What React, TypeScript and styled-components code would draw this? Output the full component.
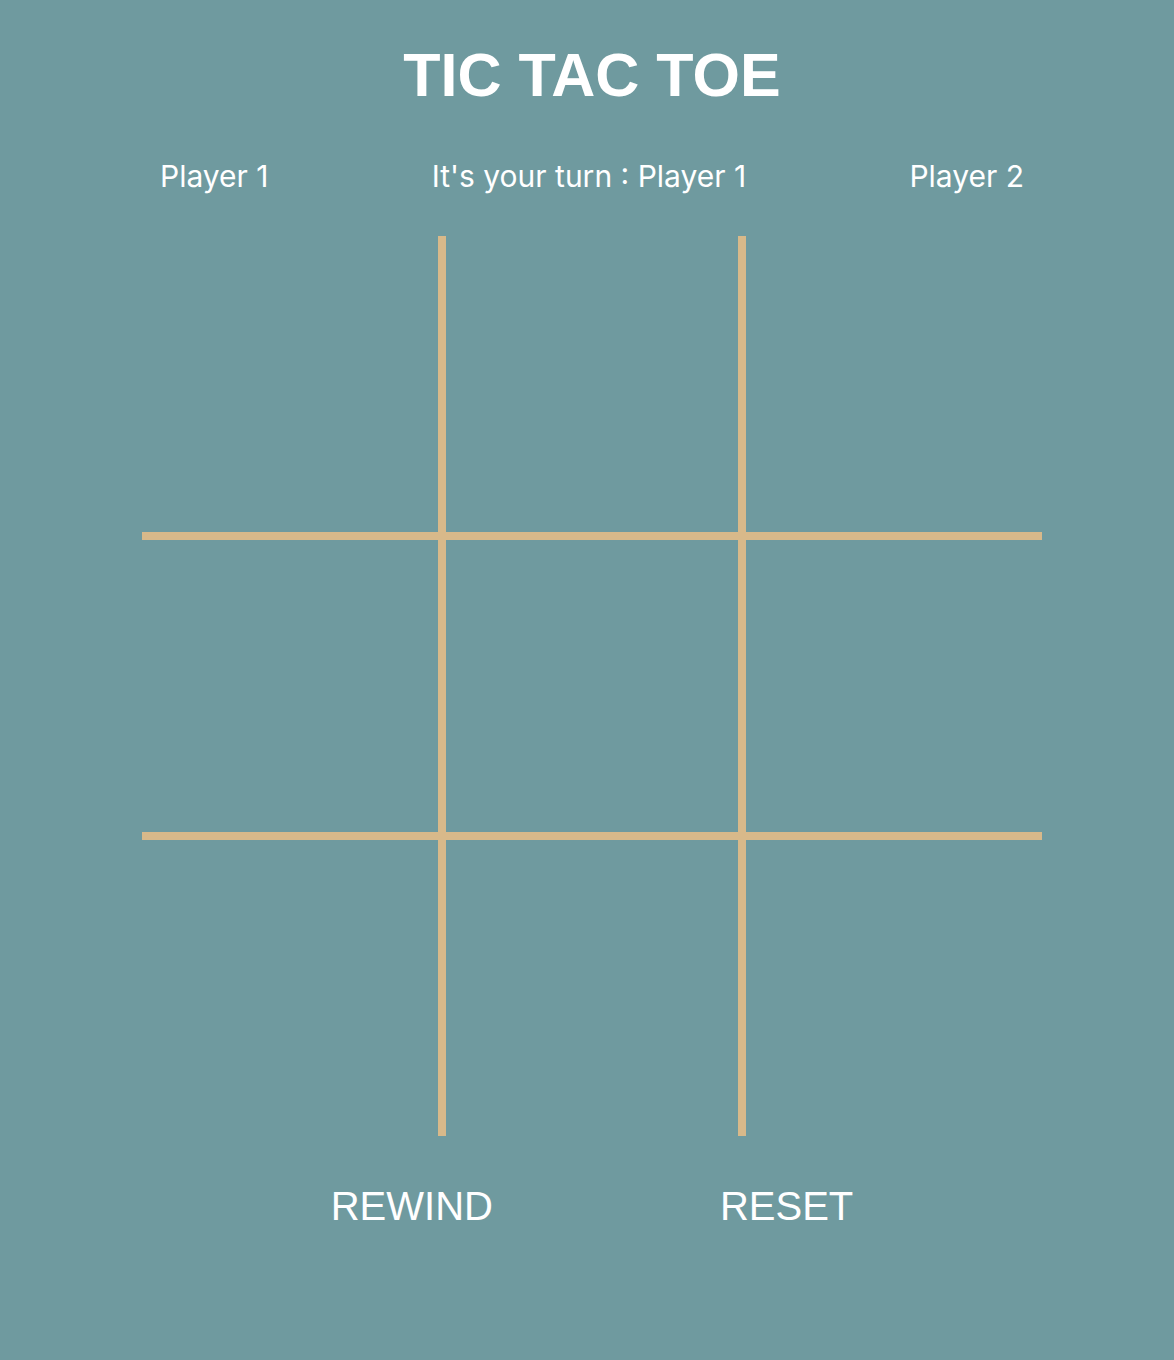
import React, { useState } from 'react'
import styled, { createGlobalStyle } from 'styled-components'

type Mark = 'X' | 'O' | null

const GlobalStyle = createGlobalStyle`
  html, body {
    margin: 0;
    padding: 0;
    background: #6f9a9f;
  }
  * {
    box-sizing: border-box;
  }
`

export default function App() {
  const [board, setBoard] = useState<Mark[]>(Array(9).fill(null))
  const [history, setHistory] = useState<Mark[][]>([])
  const [isFirst, setIsFirst] = useState(true)

  const handlePlay = (index: number) => {
    if (board[index]) return
    const next = [...board]
    next[index] = isFirst ? 'X' : 'O'
    setHistory(prev => [...prev, board])
    setBoard(next)
    setIsFirst(!isFirst)
  }

  const handleRewind = () => {
    if (!history.length) return
    setBoard(history[history.length - 1])
    setHistory(prev => prev.slice(0, -1))
    setIsFirst(!isFirst)
  }

  const handleReset = () => {
    setBoard(Array(9).fill(null))
    setHistory([])
    setIsFirst(true)
  }

  return (
    <Page>
      <GlobalStyle />
      <Title>TIC TAC TOE</Title>
      <PlayersRow>
        <PlayerName>Player 1</PlayerName>
        <PlayerName>It's your turn : {isFirst ? 'Player 1' : 'Player 2'}</PlayerName>
        <PlayerName>Player 2</PlayerName>
      </PlayersRow>
      <Board>
        {board.map((mark, i) => (
          <Cell key={i} $row={Math.floor(i / 3)} $col={i % 3} onClick={() => handlePlay(i)}>
            {mark}
          </Cell>
        ))}
      </Board>
      <Controls>
        <ControlButton onClick={handleRewind}>REWIND</ControlButton>
        <ControlButton onClick={handleReset}>RESET</ControlButton>
      </Controls>
    </Page>
  )
}

const Page = styled.div`
  min-height: 1360px;
  display: flex;
  flex-direction: column;
  align-items: center;
  background: #6f9a9f;
  padding-top: 45px;
  padding-left: 10px;
`

const Title = styled.h1`
  margin: 0;
  font-family: "Liberation Sans", Arial, sans-serif;
  font-weight: 700;
  font-size: 61px;
  line-height: 60px;
  color: #ffffff;
`

const PlayersRow = styled.div`
  width: 900px;
  margin-top: 53px;
  padding: 0 18px;
  display: flex;
  justify-content: space-between;
  align-items: center;
`

const PlayerName = styled.span`
  font-family: Inter, "Noto Sans", sans-serif;
  font-size: 30px;
  line-height: 36px;
  color: #ffffff;
`

const Board = styled.div`
  width: 900px;
  margin-top: 42px;
  display: grid;
  grid-template-columns: repeat(3, 300px);
  grid-template-rows: repeat(3, 300px);
`

const Cell = styled.div<{ $row: number; $col: number }>`
  display: flex;
  align-items: center;
  justify-content: center;
  font-family: "Liberation Sans", Arial, sans-serif;
  font-size: 160px;
  color: #ffffff;
  cursor: pointer;
  border: 0 solid #d8b98a;
  border-left-width: ${p => (p.$col > 0 ? 4 : 0)}px;
  border-right-width: ${p => (p.$col < 2 ? 4 : 0)}px;
  border-top-width: ${p => (p.$row > 0 ? 4 : 0)}px;
  border-bottom-width: ${p => (p.$row < 2 ? 4 : 0)}px;
`

const Controls = styled.div`
  margin-top: 47px;
  display: flex;
  gap: 227px;
`

const ControlButton = styled.button`
  padding: 0;
  border: none;
  background: none;
  font-family: "Liberation Sans", Arial, sans-serif;
  font-size: 40px;
  line-height: 46px;
  color: #ffffff;
  cursor: pointer;
`
